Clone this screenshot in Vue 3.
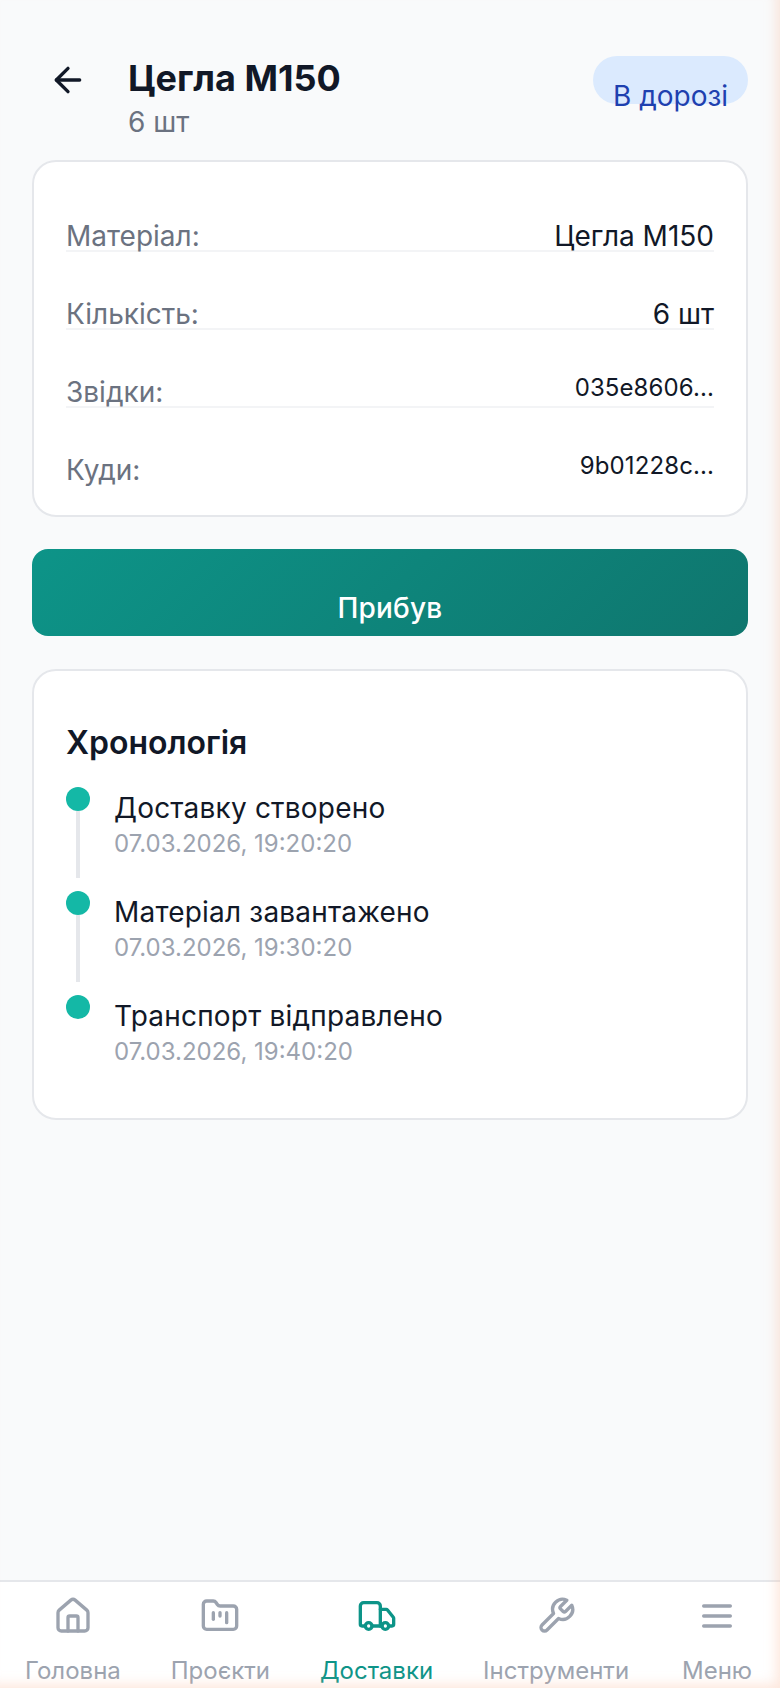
<template>
  <div class="page">
    <main class="content">
      <header class="top">
        <button class="back" type="button" aria-label="Назад">
          <svg viewBox="0 0 24 24" class="icon-back"><path d="m12 19-7-7 7-7" /><path d="M19 12H5" /></svg>
        </button>
        <div class="top-text">
          <h1 class="title">Цегла М150</h1>
          <p class="subtitle">6 шт</p>
        </div>
        <span class="badge"><span class="badge-text">В дорозі</span></span>
      </header>

      <section class="card info">
        <div v-for="row in rows" :key="row.label" class="row">
          <span class="row-label">{{ row.label }}</span>
          <span class="row-value" :class="{ small: row.small }">{{ row.value }}</span>
        </div>
      </section>

      <button class="arrive" type="button">Прибув</button>

      <section class="card history">
        <h2 class="history-title">Хронологія</h2>
        <div v-for="(ev, i) in events" :key="ev.name" class="event">
          <div class="marker">
            <span class="dot"></span>
            <span v-if="i < events.length - 1" class="line"></span>
          </div>
          <div class="event-text">
            <div class="event-name">{{ ev.name }}</div>
            <div class="event-date">{{ ev.date }}</div>
          </div>
        </div>
      </section>
    </main>

    <nav class="nav">
      <a v-for="item in nav" :key="item.label" class="nav-item" :class="{ active: item.active }">
        <svg viewBox="0 0 24 24" class="nav-icon">
          <path v-for="d in item.paths" :key="d" :d="d" />
          <circle v-for="c in item.circles" :key="c" :cx="c" cy="18" r="2" />
        </svg>
        <span class="nav-label">{{ item.label }}</span>
      </a>
    </nav>

    <div class="edge-glow"></div>
  </div>
</template>

<script setup>
const rows = [
  { label: 'Матеріал:', value: 'Цегла М150' },
  { label: 'Кількість:', value: '6 шт' },
  { label: 'Звідки:', value: '035e8606...', small: true },
  { label: 'Куди:', value: '9b01228c...', small: true }
]

const events = [
  { name: 'Доставку створено', date: '07.03.2026, 19:20:20' },
  { name: 'Матеріал завантажено', date: '07.03.2026, 19:30:20' },
  { name: 'Транспорт відправлено', date: '07.03.2026, 19:40:20' }
]

const nav = [
  {
    label: 'Головна',
    paths: [
      'M15 21v-8a1 1 0 0 0-1-1h-4a1 1 0 0 0-1 1v8',
      'M3 10a2 2 0 0 1 .709-1.528l7-5.999a2 2 0 0 1 2.582 0l7 5.999A2 2 0 0 1 21 10v9a2 2 0 0 1-2 2H5a2 2 0 0 1-2-2z'
    ]
  },
  {
    label: 'Проєкти',
    paths: [
      'M4 20h16a2 2 0 0 0 2-2V8a2 2 0 0 0-2-2h-7.93a2 2 0 0 1-1.66-.9l-.82-1.2A2 2 0 0 0 7.93 3H4a2 2 0 0 0-2 2v13c0 1.1.9 2 2 2Z',
      'M8 10v4',
      'M12 10v2',
      'M16 10v6'
    ]
  },
  {
    label: 'Доставки',
    active: true,
    paths: [
      'M14 18V6a2 2 0 0 0-2-2H4a2 2 0 0 0-2 2v11a1 1 0 0 0 1 1h2',
      'M15 18H9',
      'M19 18h2a1 1 0 0 0 1-1v-3.65a1 1 0 0 0-.22-.624l-3.48-4.35A1 1 0 0 0 17.52 8H14'
    ],
    circles: [17, 7]
  },
  {
    label: 'Інструменти',
    paths: [
      'M14.7 6.3a1 1 0 0 0 0 1.4l1.6 1.6a1 1 0 0 0 1.4 0l3.77-3.77a6 6 0 0 1-7.94 7.94l-6.91 6.91a2.12 2.12 0 0 1-3-3l6.91-6.91a6 6 0 0 1 7.94-7.94l-3.76 3.76z'
    ]
  },
  {
    label: 'Меню',
    paths: ['M4 12h16', 'M4 6h16', 'M4 18h16']
  }
]
</script>

<style scoped>
.page {
  position: relative;
  display: flex;
  flex-direction: column;
  height: 1688px;
  overflow: hidden;
  background: #f9fafb;
  font-family: Inter, "Noto Sans", sans-serif;
  color: #111827;
}

.content {
  flex: 1;
  padding: 56px 32px 0;
}

.top {
  display: flex;
  align-items: flex-start;
  height: 104px;
}

.back {
  display: flex;
  width: 40px;
  height: 40px;
  margin: 4px 40px 0 16px;
  padding: 0;
  border: none;
  background: none;
}

.icon-back {
  width: 40px;
  height: 40px;
  fill: none;
  stroke: #111827;
  stroke-width: 2;
  stroke-linecap: round;
  stroke-linejoin: round;
}

.top-text {
  flex: 1;
}

.title {
  margin: 0;
  font-size: 36px;
  line-height: 44px;
  font-weight: 700;
}

.subtitle {
  margin: 5px 0 0;
  font-size: 28px;
  line-height: 34px;
  color: #6b7280;
}

.badge {
  width: 155px;
  height: 48px;
  border-radius: 24px;
  background: #dbeafe;
  box-sizing: border-box;
  padding-top: 24px;
  text-align: center;
}

.badge-text {
  display: block;
  font-size: 28px;
  line-height: 32px;
  color: #1e40af;
}

.card {
  box-sizing: border-box;
  border: 2px solid #e5e7eb;
  border-radius: 24px;
  background: #fff;
}

.info {
  padding: 32px 32px 31px;
}

.row {
  display: flex;
  justify-content: space-between;
  align-items: flex-start;
  padding-top: 48px;
  border-bottom: 2px solid #f3f4f6;
}

.row:first-child {
  padding-top: 28px;
}

.row:last-child {
  border-bottom: none;
}

.row-label {
  font-size: 28px;
  line-height: 28px;
  color: #6b7280;
}

.row-value {
  font-size: 28px;
  line-height: 28px;
  color: #111827;
}

.row-value.small {
  font-size: 24px;
  line-height: 20px;
  letter-spacing: 0.1px;
}

.arrive {
  display: block;
  width: 100%;
  height: 87px;
  margin: 32px 0 33px;
  padding: 30px 0 0;
  border: none;
  border-radius: 16px;
  background: linear-gradient(135deg, #0d9488, #0f766e);
  color: #fff;
  font-family: inherit;
  font-size: 28px;
  font-weight: 500;
  letter-spacing: 0.2px;
}

.history {
  height: 451px;
  padding: 53px 32px 0;
}

.history-title {
  margin: 0 0 25px;
  font-size: 32px;
  line-height: 38px;
  font-weight: 600;
}

.event {
  display: flex;
  gap: 24px;
  height: 104px;
}

.marker {
  display: flex;
  flex-direction: column;
  align-items: center;
  width: 24px;
}

.dot {
  flex: none;
  width: 24px;
  height: 24px;
  border-radius: 50%;
  background: #14b8a6;
}

.line {
  width: 4px;
  height: 67px;
  background: #e5e7eb;
}

.event-text {
  padding-top: 4px;
}

.event-name {
  font-size: 28px;
  line-height: 34px;
  letter-spacing: 0.2px;
}

.event-date {
  margin-top: 4px;
  font-size: 24px;
  line-height: 30px;
  color: #9ca3af;
}

.nav {
  display: flex;
  justify-content: space-around;
  height: 106px;
  border-top: 2px solid #e5e7eb;
  background: #fff;
}

.nav-item {
  display: flex;
  flex-direction: column;
  align-items: center;
  min-width: 76px;
  padding-top: 14px;
  color: #9ca3af;
}

.nav-item.active {
  color: #0d9488;
}

.nav-icon {
  width: 40px;
  height: 40px;
  fill: none;
  stroke: currentColor;
  stroke-width: 2;
  stroke-linecap: round;
  stroke-linejoin: round;
}

.nav-label {
  margin-top: 20px;
  font-size: 24px;
  line-height: 30px;
}

.edge-glow {
  position: absolute;
  inset: 0;
  pointer-events: none;
  box-shadow: inset -8px -8px 12px -4px rgba(250, 190, 160, 0.35);
}
</style>
